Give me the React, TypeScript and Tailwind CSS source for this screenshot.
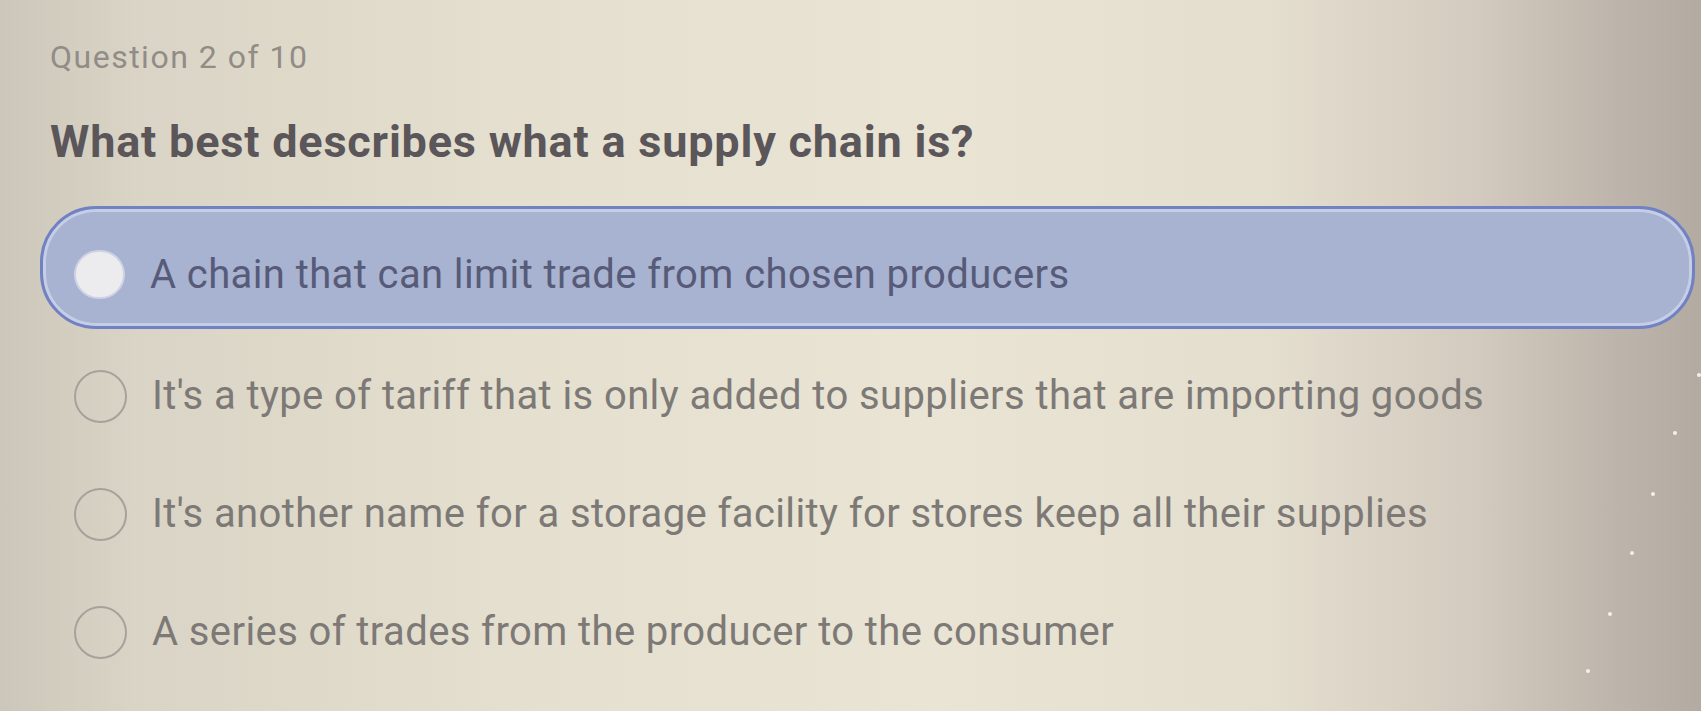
import { useState } from "react";

const choices = [
  "A chain that can limit trade from chosen producers",
  "It's a type of tariff that is only added to suppliers that are importing goods",
  "It's another name for a storage facility for stores keep all their supplies",
  "A series of trades from the producer to the consumer",
];

// little specks of dust on the glass, right side
const specks = [
  "left-[1697px] top-[373px]",
  "left-[1673px] top-[431px]",
  "left-[1651px] top-[492px]",
  "left-[1630px] top-[551px]",
  "left-[1608px] top-[612px]",
  "left-[1586px] top-[669px]",
];

function Radio({ active }: { active: boolean }) {
  return (
    <span
      className={
        active
          ? "h-[49px] w-[51px] shrink-0 rounded-full border-2 border-[#cdd2e4] bg-[#ecebee]"
          : "h-[53px] w-[53px] shrink-0 rounded-full border-2 border-[#a6a19b] bg-transparent"
      }
    />
  );
}

export default function App() {
  const [picked, setPicked] = useState(0);

  return (
    <div className="relative min-h-[711px] w-full overflow-hidden bg-[linear-gradient(90deg,#cdc7bb_0%,#dad4c6_8%,#e5dfcf_30%,#e9e4d3_55%,#e4decf_75%,#d2cabe_87%,#bdb5ab_95%,#b3aba2_100%)] pt-[38px] font-['Roboto',sans-serif]">
      <p className="pl-[50px] text-[32px] leading-[38px] tracking-[1.5px] text-[#918c86]">Question 2 of 10</p>
      <h1 className="mt-[40px] pl-[50px] text-[45px] font-bold leading-[52px] tracking-[0.8px] text-[#5a565a]">
        What best describes what a supply chain is?
      </h1>

      <ul className="mt-[38px] flex flex-col">
        {choices.map((text, i) =>
          i === picked ? (
            <li
              key={text}
              onClick={() => setPicked(i)}
              className="mb-[8px] ml-[40px] mr-[6px] flex h-[123px] cursor-pointer items-center gap-[25px] rounded-[56px] border-[3px] border-[#7182c3] bg-[#a8b2d1] pl-[31px] pt-[14px] shadow-[inset_0_0_0_3px_#c6cde6]"
            >
              <Radio active />
              <span className="text-[40px] tracking-[0.4px] text-[#575b78]">{text}</span>
            </li>
          ) : (
            <li
              key={text}
              onClick={() => setPicked(i)}
              className="flex h-[118px] cursor-pointer items-center gap-[25px] pl-[74px]"
            >
              <Radio active={false} />
              <span className="text-[40px] tracking-[0.4px] text-[#7d7976]">{text}</span>
            </li>
          )
        )}
      </ul>

      {specks.map((pos) => (
        <span key={pos} className={`absolute h-[4px] w-[4px] rounded-full bg-[#f4f1ea] ${pos}`} />
      ))}
    </div>
  );
}
